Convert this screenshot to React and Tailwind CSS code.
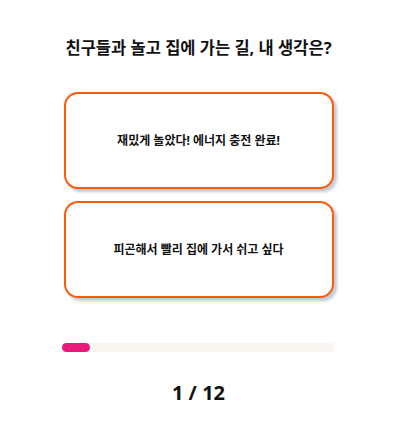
import React from "react";

const options = ["재밌게 놀았다! 에너지 충전 완료!", "피곤해서 빨리 집에 가서 쉬고 싶다"];

export default function App() {
	const current = 1;
	const total = 12;

	return (
		<div
			className="w-[400px] h-[440px] bg-white flex flex-col items-center pt-[36px] pr-[3px]"
			style={{ fontFamily: '"Noto Sans", "Noto Sans CJK KR", sans-serif' }}
		>
			<h1 className="text-[16.5px] font-bold text-[#111] leading-[24px]">
				친구들과 놀고 집에 가는 길, 내 생각은?
			</h1>

			{/* Choices */}
			<div className="mt-[32px] flex flex-col gap-[12px]">
				{options.map((opt) => (
					<button
						key={opt}
						className="w-[270px] h-[97px] bg-white border-2 border-[#ff5a0a] rounded-[14px] shadow-[3px_3px_3px_rgba(150,165,185,0.6)] flex items-center justify-center text-[12px] font-bold text-[#111]"
					>
						{opt}
					</button>
				))}
			</div>

			{/* Progress */}
			<div className="mt-[45px] w-[273px] h-[9px] rounded-full bg-[#f9f5f1]">
				<div
					className="h-full rounded-full bg-[#e8197a]"
					style={{ width: `${(28 / 273) * 100}%` }}
				/>
			</div>

			<div className="mt-[27px] text-[20px] font-bold text-[#111] leading-[28px]">
				{current} / {total}
			</div>
		</div>
	);
}
